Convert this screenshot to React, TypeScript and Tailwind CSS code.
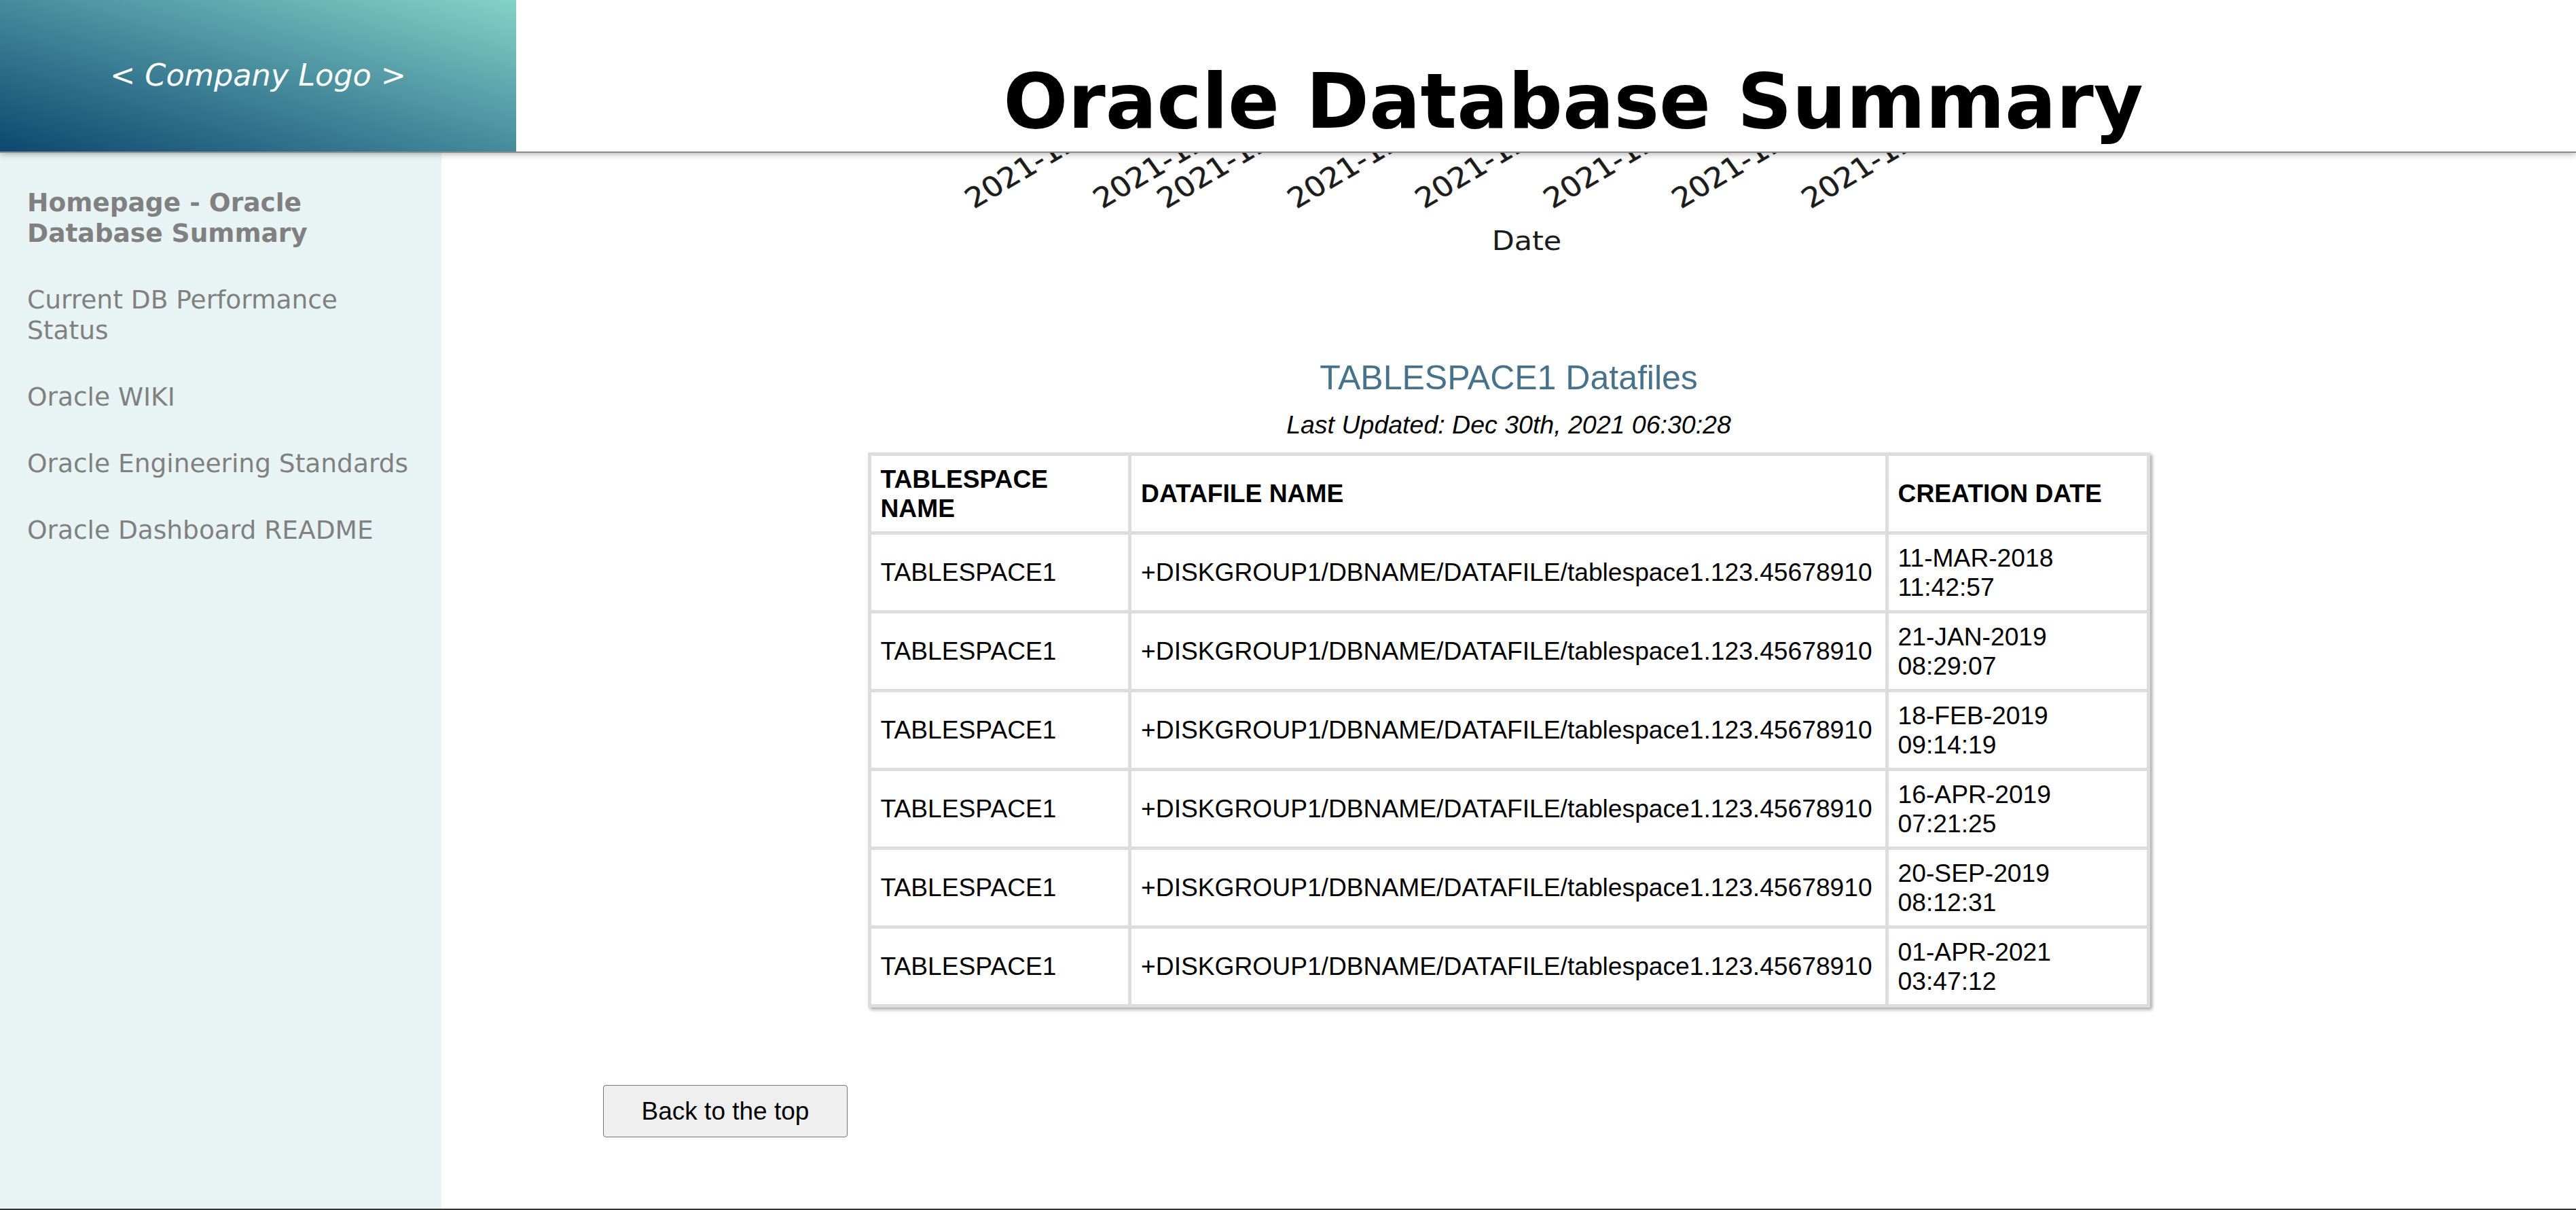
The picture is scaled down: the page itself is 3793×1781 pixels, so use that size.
import React from "react";

const rows = [
  ["11-MAR-2018", "11:42:57"],
  ["21-JAN-2019", "08:29:07"],
  ["18-FEB-2019", "09:14:19"],
  ["16-APR-2019", "07:21:25"],
  ["20-SEP-2019", "08:12:31"],
  ["01-APR-2021", "03:47:12"],
];

const ticks = [
  { x: 1434, t: "2021-12-16" },
  { x: 1623, t: "2021-12-18" },
  { x: 1717, t: "2021-12-19" },
  { x: 1909, t: "2021-12-21" },
  { x: 2097, t: "2021-12-23" },
  { x: 2286, t: "2021-12-25" },
  { x: 2475, t: "2021-12-27" },
  { x: 2666, t: "2021-12-29" },
];

const navItems = [
  { label: "Homepage - Oracle Database Summary", bold: true },
  { label: "Current DB Performance Status", bold: false },
  { label: "Oracle WIKI", bold: false },
  { label: "Oracle Engineering Standards", bold: false },
  { label: "Oracle Dashboard README", bold: false },
];

export default function App() {
  const mainLeft = 650;
  const chartTop = 223;
  return (
    <div className="flex h-[1781px] w-full flex-col overflow-hidden bg-white">
      <header className="relative z-10 flex h-[223px] shrink-0 bg-white shadow-[0_2px_0_#8a8a8a,0_4px_9px_rgba(0,0,0,0.3)]">
        <div className="flex w-[760px] shrink-0 items-center justify-center bg-linear-to-tr from-[#0c4870] to-[#83d3c7]">
          <span className="font-['DejaVu_Sans',sans-serif] text-[44.5px] italic leading-none text-white">
            &lt; Company Logo &gt;
          </span>
        </div>
        <div className="flex-1 pl-[80px] pt-[93px] text-center">
          <h1 className="font-['DejaVu_Sans',sans-serif] text-[112px] font-bold leading-none text-black">
            Oracle Database Summary
          </h1>
        </div>
      </header>

      <div className="flex min-h-0 flex-1">
        <nav className="flex w-[650px] shrink-0 flex-col gap-[53px] bg-[#e8f4f4] pl-[40px] pr-[36px] pt-[53px] font-['DejaVu_Sans',sans-serif] text-[37.5px] leading-[45px] text-[#808080]">
          {navItems.map((n) => (
            <a key={n.label} className={n.bold ? "font-bold" : "font-normal"}>
              {n.label}
            </a>
          ))}
        </nav>

        <main className="flex min-w-0 flex-1 flex-col">
          <svg width={3143} height={160} className="block shrink-0">
            {ticks.map((tk) => {
              const x = tk.x - mainLeft;
              const y = 308 - chartTop;
              return (
                <text
                  key={tk.x}
                  x={0}
                  y={0}
                  fontFamily="DejaVu Sans, sans-serif"
                  fontSize={41}
                  fill="#1c1c1c"
                  stroke="#1c1c1c"
                  strokeWidth={0.5}
                  transform={`translate(${x} ${y}) scale(1.1 1) rotate(-33)`}
                >
                  {tk.t}
                </text>
              );
            })}
            <text
              x={0}
              y={0}
              textAnchor="middle"
              fontFamily="DejaVu Sans, sans-serif"
              fontSize={39}
              fill="#1c1c1c"
              transform={`translate(${2248 - mainLeft} ${368 - chartTop}) scale(1.1 1)`}
            >
              Date
            </text>
          </svg>

          <h2 className="mt-[145px] text-center font-['Liberation_Sans',Arial,sans-serif] text-[50px] font-normal leading-[56px] text-[#46728c]">
            TABLESPACE1 Datafiles
          </h2>
          <p className="mt-[20px] text-center font-['Liberation_Sans',Arial,sans-serif] text-[37.5px] italic leading-[42.5px] text-black">
            Last Updated: Dec 30th, 2021 06:30:28
          </p>

          <table className="mx-auto mt-[19.5px] w-[1888px] table-fixed border-collapse border-[5px] border-[#dddddd] font-['Liberation_Sans',Arial,sans-serif] text-[37.2px] leading-[42.7px] text-black shadow-[3px_3px_5px_rgba(0,0,0,0.35)]">
            <colgroup>
              <col className="w-[20.37%]" />
              <col className="w-[59.19%]" />
              <col className="w-[20.44%]" />
            </colgroup>
            <thead>
              <tr>
                <th className="border-[5px] border-[#dddddd] px-[14px] py-[12.8px] text-left align-middle font-bold">
                  TABLESPACE NAME
                </th>
                <th className="border-[5px] border-[#dddddd] px-[14px] py-[12.8px] text-left align-middle font-bold">
                  DATAFILE NAME
                </th>
                <th className="border-[5px] border-[#dddddd] px-[14px] py-[12.8px] text-left align-middle font-bold">
                  CREATION DATE
                </th>
              </tr>
            </thead>
            <tbody>
              {rows.map((r) => (
                <tr key={r[0]}>
                  <td className="border-[5px] border-[#dddddd] px-[14px] py-[12.8px] align-middle">
                    TABLESPACE1
                  </td>
                  <td className="whitespace-nowrap border-[5px] border-[#dddddd] px-[14px] py-[12.8px] align-middle">
                    +DISKGROUP1/DBNAME/DATAFILE/tablespace1.123.45678910
                  </td>
                  <td className="border-[5px] border-[#dddddd] px-[14px] py-[12.8px] align-middle">
                    {r[0]} {r[1]}
                  </td>
                </tr>
              ))}
            </tbody>
          </table>

          <div className="mt-[114px] pl-[238px]">
            <button className="flex h-[77px] w-[360px] items-center justify-center rounded-[4px] border border-[#767676] bg-[#efefef] font-['Liberation_Sans',Arial,sans-serif] text-[37px] leading-none text-black">
              Back to the top
            </button>
          </div>
        </main>
      </div>
      <div className="h-[2px] shrink-0 bg-[#333333]" />
    </div>
  );
}
